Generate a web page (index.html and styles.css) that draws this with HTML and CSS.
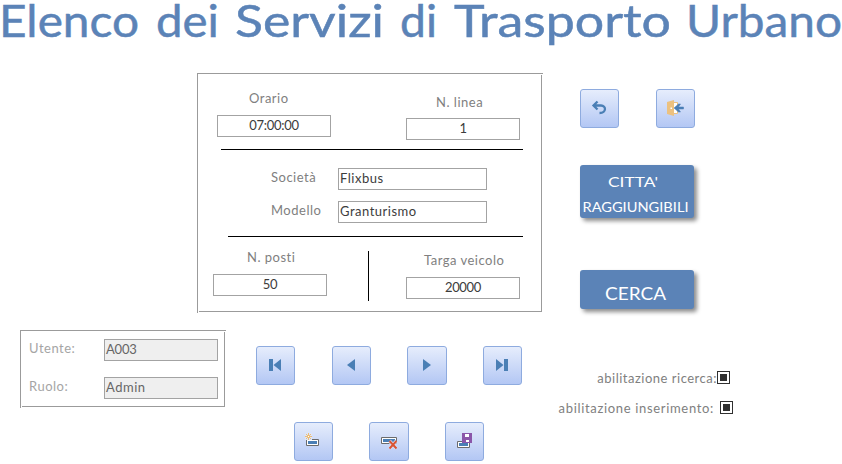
FILE: index.html
```html
<!DOCTYPE html>
<html lang="it">
<head>
<meta charset="utf-8">
<title>Elenco dei Servizi di Trasporto Urbano</title>
<link rel="stylesheet" href="styles.css">
</head>
<body>
<header class="header">
  <svg class="title" width="842" height="60" role="heading" aria-level="1">
    <text y="37"><tspan x="-1" textLength="140" lengthAdjust="spacingAndGlyphs">Elenco</tspan> <tspan x="156" textLength="63" lengthAdjust="spacingAndGlyphs">dei</tspan> <tspan x="235" textLength="149" lengthAdjust="spacingAndGlyphs">Servizi</tspan> <tspan x="400" textLength="37" lengthAdjust="spacingAndGlyphs">di</tspan> <tspan x="454" textLength="217" lengthAdjust="spacingAndGlyphs">Trasporto</tspan> <tspan x="686" textLength="156" lengthAdjust="spacingAndGlyphs">Urbano</tspan></text>
  </svg>
</header>
<main>
  <section class="upper">
    <div class="card frame">
      <div class="pair times">
        <div class="field"><span class="label orario">Orario</span><div class="input num">07:00:00</div></div>
        <div class="field low"><span class="label linea">N. linea</span><div class="input num">1</div></div>
      </div>
      <hr class="rule rule-top">
      <div class="rows">
        <div class="row"><span class="label">Società</span><div class="input wide">Flixbus</div></div>
        <div class="row"><span class="label">Modello</span><div class="input wide">Granturismo</div></div>
      </div>
      <hr class="rule rule-bottom">
      <div class="pair vehicle">
        <div class="field"><span class="label posti">N. posti</span><div class="input num">50</div></div>
        <div class="divider"></div>
        <div class="field low"><span class="label targa">Targa veicolo</span><div class="input num">20000</div></div>
      </div>
    </div>
    <aside class="side">
      <div class="tools">
        <button class="icon" aria-label="Annulla"><svg viewBox="0 0 39 39"><path d="M17.500 12.500 13.500 16.500l4 4M14 16.500h7c5.500 0 5.500 7.500-1.500 7.500" fill="none" stroke="#4a7fb5" stroke-width="2.300"/></svg></button>
        <button class="icon" aria-label="Esci"><svg viewBox="0 0 39 39"><path d="M17 13.500h4.500v11H17z" fill="#fff" stroke="#ecc17f"/><path d="M11 13l7-2v16l-7-2z" fill="#ecc17f"/><path d="M14.500 18.500h1.500v1.500h-1.500z" fill="#fff"/><path d="M18 19l4.500-4h2l-2 3h5v2h-5l2 3h-2z" fill="#4a7fb5" stroke="#4a7fb5" stroke-width=".5"/></svg></button>
      </div>
      <button class="action city"><svg viewBox="0 0 114 53"><text x="28" y="22" textLength="50" lengthAdjust="spacingAndGlyphs">CITTA'</text><text x="2.500" y="47" textLength="106" lengthAdjust="spacingAndGlyphs">RAGGIUNGIBILI</text></svg></button>
      <button class="action search"><svg viewBox="0 0 114 39"><text x="25" y="30" textLength="61" lengthAdjust="spacingAndGlyphs">CERCA</text></svg></button>
    </aside>
  </section>
  <section class="lower">
    <div class="user frame">
      <div class="row"><span class="label">Utente:</span><div class="input off code">A003</div></div>
      <div class="row"><span class="label">Ruolo:</span><div class="input off">Admin</div></div>
    </div>
    <nav class="records">
      <div class="line">
        <button class="icon" aria-label="Primo"><svg viewBox="0 0 39 39"><path d="M13 13h4v12h-4zM25 13v12l-7.500-6z" fill="#4a7fb5"/></svg></button>
        <button class="icon prev" aria-label="Precedente"><svg viewBox="0 0 39 39"><path d="M23 13v12l-8-6z" fill="#4a7fb5"/></svg></button>
        <button class="icon wider" aria-label="Successivo"><svg viewBox="0 0 39 39"><path d="M16 13v12l8-6z" fill="#4a7fb5"/></svg></button>
        <button class="icon" aria-label="Ultimo"><svg viewBox="0 0 39 39"><path d="M21 13h4v12h-4zM13 13v12l7.500-6z" fill="#4a7fb5"/></svg></button>
      </div>
      <div class="line edit">
        <button class="icon" aria-label="Nuovo"><svg viewBox="0 0 39 39"><path d="M12.500 17.500h12v6h-12z" fill="#fff" stroke="#6c6c6c"/><path d="M14 19h9v3h-9z" fill="#4a7fb5"/><path d="M11 11h7v7h-7z" fill="#dce5fa"/><path d="M14.500 11v7M11 14.500h7M12 12l5 5M17 12l-5 5" stroke="#edbd76"/><path d="M14 14h1v1h-1z" fill="#fff"/></svg></button>
        <button class="icon wider" aria-label="Elimina"><svg viewBox="0 0 39 39"><path d="M12.500 15.500h15v6h-15z" fill="#fff" stroke="#6c6c6c"/><path d="M14 17h12v3H14z" fill="#4a7fb5"/><path d="M20.500 19l7 7.500M27.500 19l-7 7.500" stroke="#d7e0f9" stroke-width="3.500"/><path d="M20.500 19l7 7.500M27.500 19l-7 7.500" stroke="#d95534" stroke-width="2"/></svg></button>
        <button class="icon" aria-label="Salva"><svg viewBox="0 0 39 39"><path d="M12.500 19.500h12v6h-12z" fill="#fff" stroke="#6c6c6c"/><path d="M14 21h9v3h-9z" fill="#4a7fb5"/><path d="M17 11h10v10H17z" fill="#8a56a9"/><path d="M20 12h4v3h-4zM21 18h3v2h-3z" fill="#fff"/></svg></button>
      </div>
    </nav>
    <div class="flags">
      <div class="flag"><span class="label">abilitazione ricerca:</span><i class="check"></i></div>
      <div class="flag spaced"><span class="label">abilitazione inserimento:</span><i class="check"></i></div>
    </div>
  </section>
</main>
</body>
</html>
```
FILE: styles.css
```css
* { box-sizing: border-box; }
body {
  margin: 0;
  width: 842px;
  height: 464px;
  overflow: hidden;
  background: #fff;
  color: #3c3c3c;
  font: 13px/16px Lato, sans-serif;
  letter-spacing: .5px;
}
.header { height: 73px; }
.title { display: block; overflow: visible; }
.title text {
  font: 45px Lato, sans-serif;
  letter-spacing: 0;
  fill: #5b83b7;
  stroke: #5b83b7;
  stroke-width: .5px;
}
.upper { display: flex; height: 257px; padding-left: 197px; }
.frame {
  background:
    linear-gradient(#9b9b9b, #9b9b9b) 0 0 / 100% 1px,
    linear-gradient(#9b9b9b, #9b9b9b) 0 0 / 1px 100%,
    linear-gradient(#9b9b9b, #9b9b9b) calc(100% - 1px) 2px / 1px calc(100% - 3px),
    linear-gradient(#9b9b9b, #9b9b9b) 2px calc(100% - 1px) / calc(100% - 3px) 1px;
  background-repeat: no-repeat;
}
.card { width: 346px; height: 240px; padding-top: 17px; }
.pair { display: flex; justify-content: space-between; }
.times { height: 59px; padding: 0 23px 0 20px; }
.vehicle { height: 64px; padding: 12px 23px 0 16px; }
.field { display: flex; flex-direction: column; width: 114px; }
.label { color: #808080; white-space: nowrap; }
.field .label { margin-bottom: 9px; }
.low { padding-top: 4px; }
.field.low .label { margin-bottom: 8px; }
.orario { padding-left: 32px; }
.linea { padding-left: 30px; }
.posti { padding-left: 34px; }
.targa { padding-left: 18px; letter-spacing: .5px; }
.vehicle .low { padding-top: 3px; }
.vehicle .field.low .label { margin-bottom: 9px; }
.input {
  flex: none;
  width: 114px;
  height: 22px;
  padding-top: 1px;
  border: 1px solid #a3a3a3;
  background: #fff;
  text-align: center;
}
.num { letter-spacing: -.3px; }
.rule { height: 1px; margin: 0; border: 0; background: #000; }
.rule-top { width: 302px; margin-left: 24px; }
.rule-bottom { width: 295px; margin: 13px 0 0 31px; }
.rows { display: flex; flex-direction: column; gap: 11px; padding: 18px 0 0 74px; }
.row { display: flex; }
.rows .label { width: 67px; padding-top: 1px; }
.wide { width: 149px; padding-left: 1px; text-align: left; }
.divider { width: 1px; height: 50px; margin: 2px -4px 0 0; background: #000; }
.side { width: 115px; margin-left: 37px; padding-top: 16px; }
.tools { display: flex; justify-content: space-between; }
button { display: block; margin: 0; padding: 0; font: inherit; }
button svg { display: block; }
.icon {
  width: 39px;
  height: 39px;
  border: 1px solid #8eabdf;
  border-radius: 3px;
  background: linear-gradient(#e6edfc, #b3c7f4);
}
.icon svg { width: 39px; height: 39px; margin: -1px; }
.icon.wider { width: 40px; }
.icon.prev { margin-left: 1px; }
.action {
  width: 114px;
  border: 0;
  border-radius: 3px;
  background: #5b83b7;
  box-shadow: 3px 3px 4px rgba(0, 0, 0, .45);
}
.action text { font: 14px Lato, sans-serif; letter-spacing: 0; fill: #fff; }
.city { height: 53px; margin-top: 37px; }
.search { height: 39px; margin-top: 52px; }
.action.search text { font-size: 17px; }
.lower { display: flex; padding-left: 20px; }
.user {
  display: flex;
  flex-direction: column;
  gap: 16px;
  width: 206px;
  height: 78px;
  padding: 9px 0 0 9px;
}
.user .label { width: 75px; padding-top: 1px; color: #a5a5a5; }
.off { padding-left: 1px; background: #efefef; color: #666; text-align: left; }
.code { letter-spacing: -.2px; }
.records { width: 266px; margin-left: 30px; padding-top: 16px; }
.line { display: flex; justify-content: space-between; }
.edit { margin-top: 37px; padding: 0 38px; }
.flags { display: flex; flex-direction: column; width: 178px; margin-left: 33px; padding-top: 40px; }
.flag { display: flex; height: 30px; justify-content: flex-end; padding-right: 3px; }
.flag.spaced { gap: 6px; padding-right: 0; letter-spacing: .67px; }
.check {
  width: 13px;
  height: 13px;
  margin-top: 1px;
  border: 1px solid #303030;
  background: #303030;
  box-shadow: inset 0 0 0 2px #fff;
}
```
